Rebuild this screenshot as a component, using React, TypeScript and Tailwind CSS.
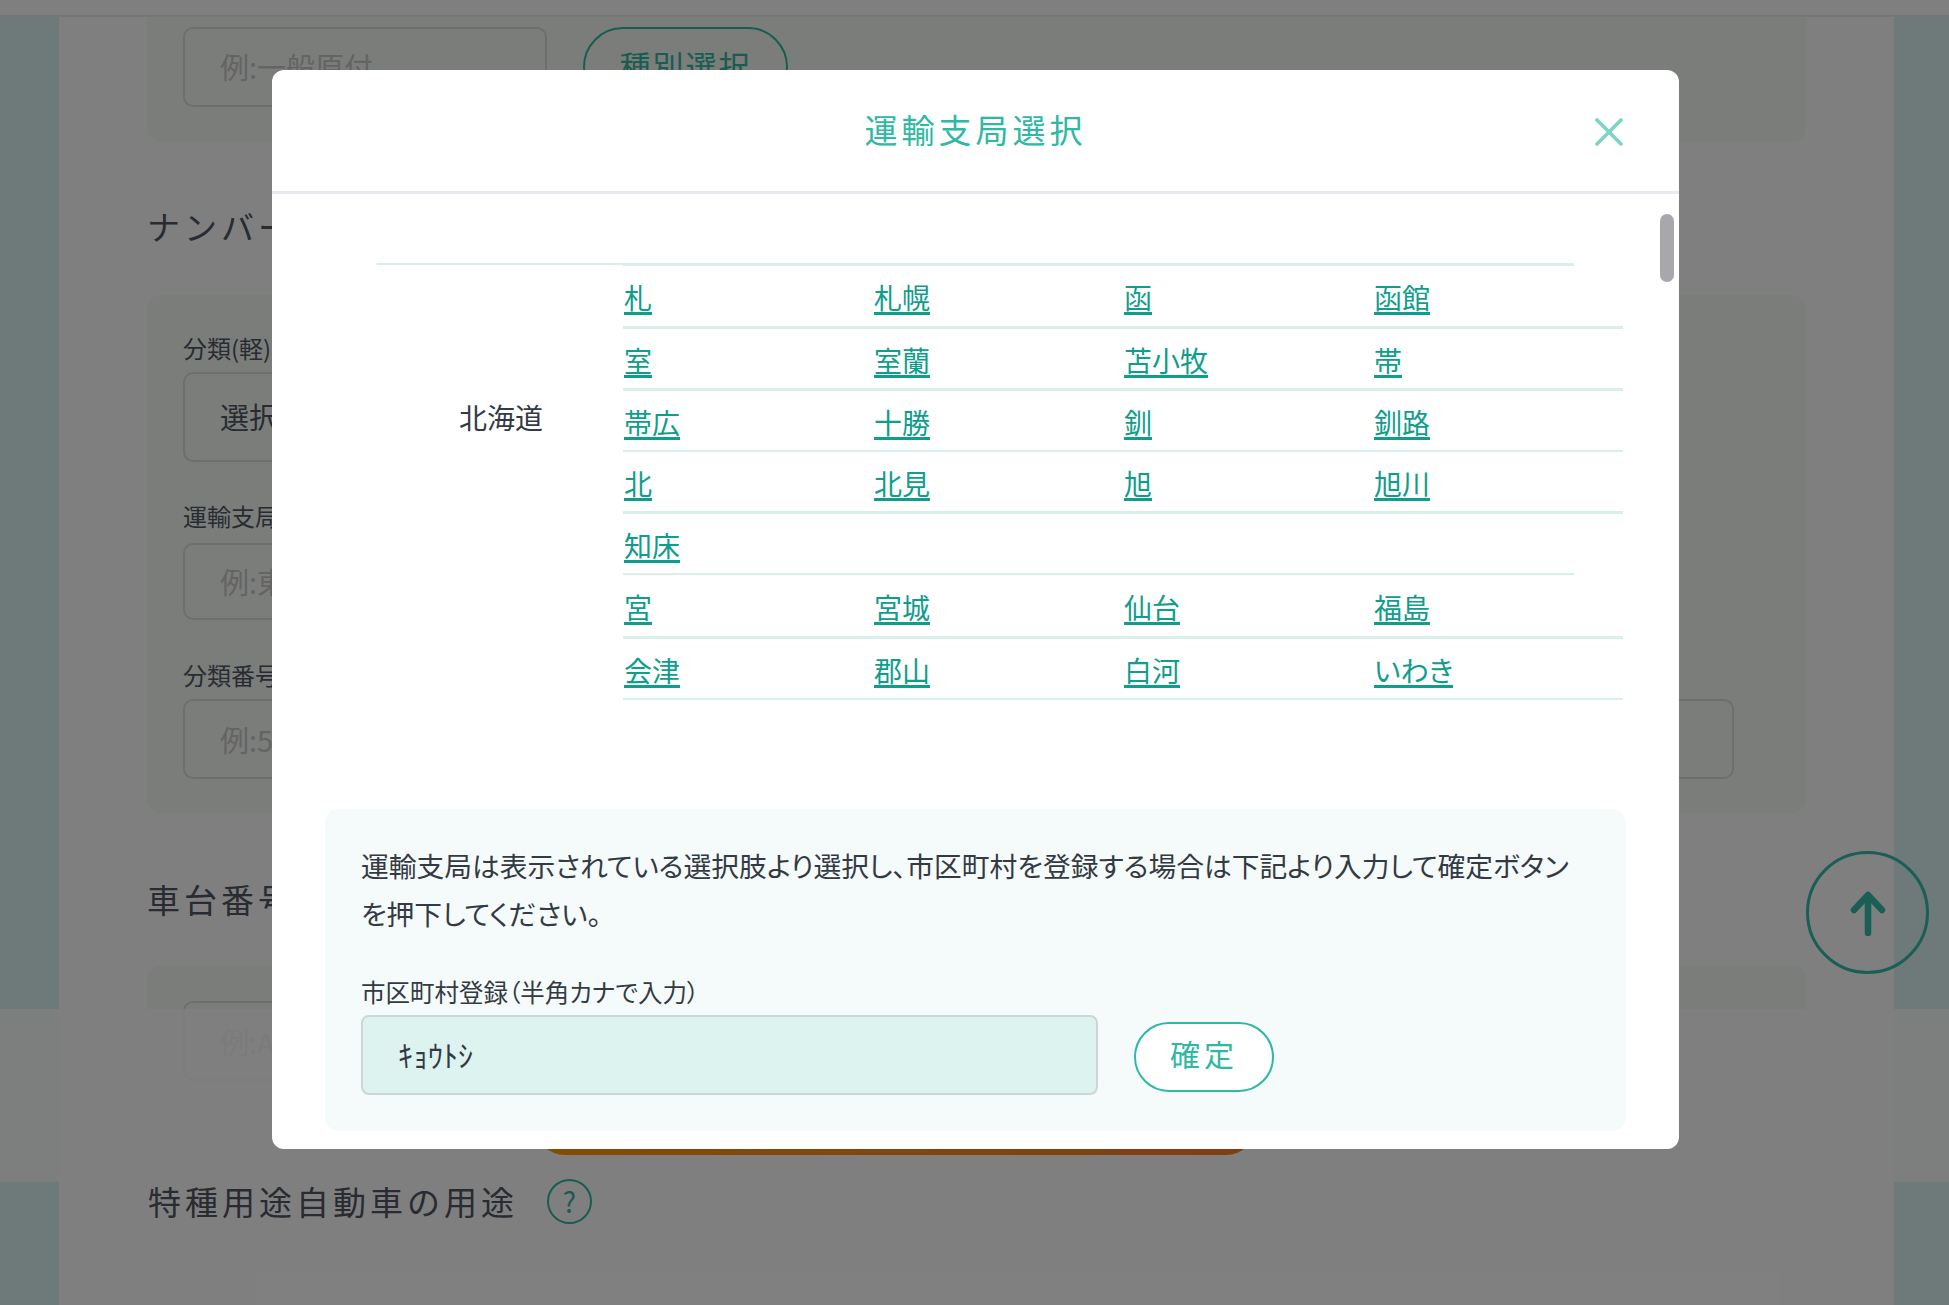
import { X } from 'lucide-react'

const rows = [
  { h: 'h-[63px] border-b-[3px] w-[1000px]', items: ['札', '札幌', '函', '函館'] },
  { h: 'h-[62px] border-b-[3px] w-[1000px]', items: ['室', '室蘭', '苫小牧', '帯'] },
  { h: 'h-[61px] border-b-2 w-[1000px]', items: ['帯広', '十勝', '釧', '釧路'] },
  { h: 'h-[62px] border-b-[3px] w-[1000px]', items: ['北', '北見', '旭', '旭川'] },
  { h: 'h-[61px] border-b-2 w-[951px]', items: ['知床'] },
  { h: 'h-[64px] border-b-[3px] w-[1000px]', items: ['宮', '宮城', '仙台', '福島'] },
  { h: 'h-[61px] border-b-2 w-[1000px]', items: ['会津', '郡山', '白河', 'いわき'] },
]

function Background() {
  return (
    <div className="h-[1305px] bg-[#daf5f3] overflow-hidden">
      <div className="h-[17px] bg-white border-b-2 border-[#ececec]"></div>
      <div className="ml-[59px] w-[1835px] h-[1288px] bg-white px-[88px]">
        <div className="h-[125px] bg-[#f6faf7] rounded-b-[14px] px-[36px] pt-[10px] flex gap-[36px]">
          <div className="w-[364px] h-[80px] border-2 border-[#dcdcdc] rounded-[10px] pl-[35px] text-[29px] leading-[74px] text-[#c8c8c8]">例:一般原付</div>
          <div className="w-[205px] h-[80px] border-2 border-[#34b8a4] rounded-full text-center text-[31px] leading-[72px] tracking-[2px] text-[#34b8a4]">種別選択</div>
        </div>
        <h2 className="mt-[60px] text-[33px] leading-[48px] tracking-[4px] text-[#505864]">ナンバー</h2>
        <div className="mt-[45px] h-[518px] bg-[#f6faf7] rounded-[14px] px-[36px] pt-[37px]">
          <div className="text-[24px] leading-[32px] text-[#505864]">分類(軽)</div>
          <div className="mt-[8px] w-[400px] h-[90px] border-2 border-[#dcdcdc] rounded-[10px] pl-[35px] text-[29px] leading-[84px] text-[#505864]">選択</div>
          <div className="mt-[38px] text-[24px] leading-[32px] text-[#505864]">運輸支局</div>
          <div className="mt-[11px] w-[400px] h-[77px] border-2 border-[#dcdcdc] rounded-[10px] pl-[35px] text-[29px] leading-[72px] text-[#c8c8c8]">例:東京</div>
          <div className="mt-[39px] text-[24px] leading-[32px] text-[#505864]">分類番号</div>
          <div className="mt-[8px] w-[1551px] h-[80px] border-2 border-[#dcdcdc] rounded-[10px] pl-[35px] text-[29px] leading-[76px] text-[#c8c8c8]">例:500</div>
        </div>
        <h2 className="mt-[62px] text-[33px] leading-[48px] tracking-[4px] text-[#505864]">車台番号</h2>
        <div className="mt-[42px] h-[118px] bg-[#f6faf7] rounded-t-[14px] px-[36px] pt-[36px]">
          <div className="w-[400px] h-[80px] border-2 border-[#dcdcdc] rounded-[10px] pl-[35px] text-[29px] leading-[76px] text-[#c8c8c8]">例:A</div>
        </div>
      </div>
    </div>
  )
}

function Footer() {
  return (
    <div className="absolute left-0 top-[1009px] w-full h-[173px] bg-white/85">
      <div className="absolute left-[535px] top-[46px] w-[721px] h-[100px] rounded-[30px] bg-gradient-to-r from-[#ff9e00] to-[#ff7c28]"></div>
    </div>
  )
}

export default function App() {
  return (
    <div className="relative w-[1949px] h-[1305px] overflow-hidden font-['Noto_Sans_CJK_JP',sans-serif]">
      <Background />
      <Footer />
      <div className="absolute left-[148px] top-[1177px] flex items-center gap-[29px]">
        <h2 className="text-[33px] leading-[48px] tracking-[4px] text-[#505864]">特種用途自動車の用途</h2>
        <div className="w-[45px] h-[45px] rounded-full border-2 border-[#34b8a4] text-center text-[28px] leading-[40px] text-[#34b8a4]">?</div>
      </div>

      <div className="absolute inset-0 bg-black/50"></div>

      <button className="absolute left-[1806px] top-[851px] w-[123px] h-[123px] rounded-full border-[3px] border-[#1a5f56] flex items-center justify-center">
        <svg width="36" height="46" viewBox="0 0 36 46" fill="#1a5f56" stroke="#1a5f56" strokeWidth="6.5" strokeLinecap="round" strokeLinejoin="round">
          <path d="M18 6V43" />
          <path d="M4 20L18 5L32 20" fill="none" />
        </svg>
      </button>

      <div className="absolute left-[272px] top-[70px] w-[1407px] h-[1079px] bg-white rounded-[12px] overflow-hidden flex flex-col">
        <div className="relative h-[124px] shrink-0 border-b-[3px] border-[#e9e9ef] flex items-center justify-center pb-[2px]">
          <h1 className="text-[33px] tracking-[4px] text-[#2fb8a3]">運輸支局選択</h1>
          <X className="absolute left-[1313px] top-[38px] text-[#7fd4c4]" size={48} strokeWidth={1.9} />
        </div>
        <div className="relative flex-1 overflow-hidden">
          <div className="absolute left-[1388px] top-[20px] w-[14px] h-[68px] rounded-full bg-[#a8a8ac]"></div>
          <div className="ml-[105px] mt-[69px] w-[1246px] flex items-start">
            <div className="w-[246px] h-[311px] pl-[2px] pb-[5px] border-t-2 border-[#d9efe9] flex items-center justify-center text-[28px] text-[#333a44]">北海道</div>
            <div className="border-t-[3px] border-[#d9efe9] w-[951px]">
              {rows.map((row, i) => (
                <div key={i} className={`${row.h} pt-[2px] pl-[1px] border-[#d9efe9] flex items-center`}>
                  {row.items.map((t) => (
                    <div key={t} className="w-[250px] shrink-0">
                      <a className="text-[28px] leading-[40px] text-[#0f9d8c] underline decoration-[3px] underline-offset-[3px] [font-feature-settings:'palt']">{t}</a>
                    </div>
                  ))}
                </div>
              ))}
            </div>
          </div>
          <div className="mx-[53px] mt-[109px] h-[322px] bg-[#f5fbfa] rounded-[14px] px-[36px] pt-[33px]">
            <p className="text-[27.75px] leading-[47.5px] text-[#333a44] [font-feature-settings:'palt']">運輸支局は表示されている選択肢より選択し、市区町村を登録する場合は下記より入力して確定ボタンを押下してください。</p>
            <div className="mt-[40px] text-[24.5px] leading-[30px] text-[#333a44] [font-feature-settings:'palt']">市区町村登録（半角カナで入力）</div>
            <div className="mt-[8px] flex items-center gap-[36px]">
              <div className="w-[737px] h-[80px] bg-[#dcf3f0] border-2 border-[#cdd6d6] rounded-[8px] pl-[35px] text-[30px] leading-[74px] text-[#333a44]">ｷｮｳﾄｼ</div>
              <button className="w-[140px] h-[70px] mt-[4px] pb-[7px] rounded-full border-2 border-[#2fb8a3] bg-white text-[30px] tracking-[4px] text-[#2fb8a3]">確定</button>
            </div>
          </div>
        </div>
      </div>
    </div>
  )
}
